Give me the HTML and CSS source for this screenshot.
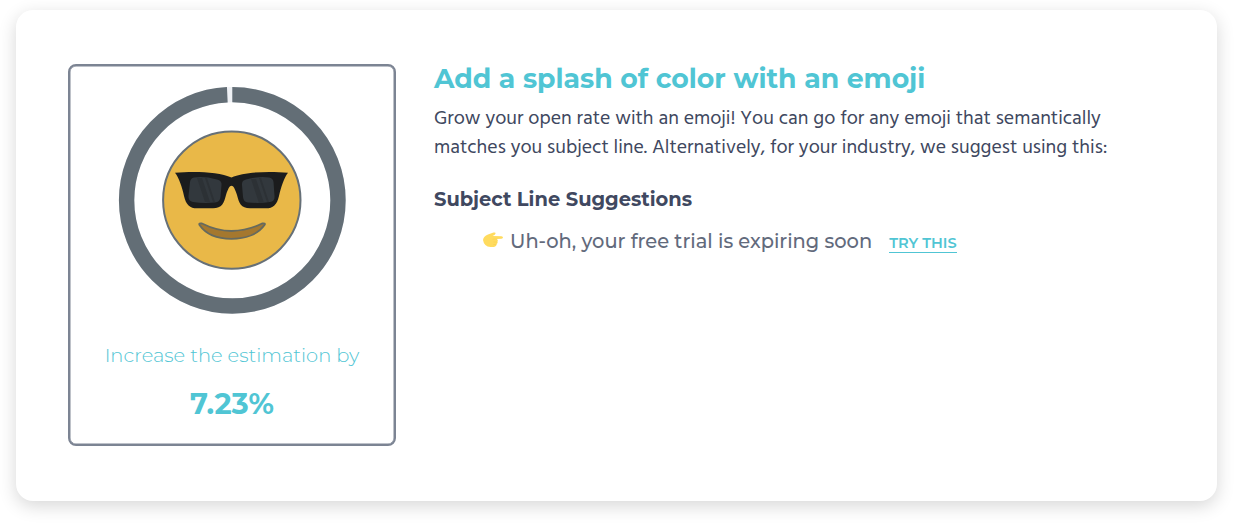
FILE: index.html
```html
<!DOCTYPE html>
<html lang="en">
<head>
    <meta charset="UTF-8">
    <meta name="viewport" content="width=device-width, initial-scale=1.0">
    <title>Subject Line Suggestions</title>
    <link rel="stylesheet" href="styles.css">
</head>
<body>
    <div class="card">
        <div class="score">
            <svg class="score-ring" viewBox="0 0 228 228">
                <circle cx="114.300" cy="114.300" r="105.7" fill="none" stroke="#eff1f5" stroke-width="15.4"/>
                <circle cx="114.300" cy="114.300" r="105.7" fill="none" stroke="#636e76" stroke-width="15.4" pathLength="1000" stroke-dasharray="992.3 7.7" transform="rotate(-90 114.300 114.300)"/>
                <!-- face -->
                <circle cx="113.8" cy="114.1" r="68.7" fill="#e9b848" stroke="#667078" stroke-width="2"/>
                <!-- sunglasses -->
                <path d="M57 86.8C76 85 101 85.8 113.5 91.5C126 85.8 151 85 170 86.8C166 92 163 101 161 110C159 119 155 122.300 148 122.300H132C123 122.300 121 117 119 109C117 103 115.500 99.800 113.500 99.800C111.500 99.800 110 103 108 109C106 117 104 122.300 95 122.300H79C72 122.300 68 119 66 110C64 101 61 92 57 86.800Z" fill="#1b1c1d"/>
                <path d="M76 91.500Q86 90 99 93.500Q104 94.500 103.500 99L102.500 111Q102 116 97 116.500Q85 117.500 75 116Q70 115 70.500 110L72 96Q72.500 92 76 91.500Z" fill="#32383d"/>
                <path d="M151 91.500Q141 90 128 93.500Q123.500 94.500 124 99L125 111Q125.500 116 130 116.500Q142 117.500 152 116Q157 115 156.500 110L155.500 96Q155 92 151 91.500Z" fill="#32383d"/>
                <path d="M79 92h5l8 24h-5zM87 92h2l8 24h-2zM133 93h5l8 24h-5zM141 92h2l8 24h-2z" fill="#2c3135"/>
                <!-- mouth -->
                <path d="M81.500 139Q80.500 137 84 137.500Q99 145 113.500 145Q130 144.500 144 137.500Q148 137 146.500 139C140 148.500 127 152.800 113.500 152.800C100 152.800 88 148.500 81.500 139Z" fill="#a5782e" stroke="#666a5e" stroke-width="1.8"/>
            </svg>
            <p class="score-label">Increase the estimation by</p>
            <p class="score-value">7.23%</p>
        </div>
        <div class="content">
            <h2 class="title">Add a splash of color with an emoji</h2>
            <p class="text">Grow your open rate with an emoji! You can go for any emoji that semantically<br>matches you subject line. Alternatively, for your industry, we suggest using this:</p>
            <h3 class="subtitle">Subject Line Suggestions</h3>
            <div class="suggestion">
                <svg class="hand" viewBox="0 0 20 16">
                    <path d="M0 8Q.5 4 5 2.500L10.500.600Q13 0 12.500 1.800Q12 3 9.500 4L18.500 4.200Q20 4.500 20 5.600Q20 6.700 18.500 6.800L14 7Q15.500 8 14.500 9.500Q15 11 13.700 12Q13.800 13.500 12.500 14.200Q11 15.300 7.500 15Q1 14.500 0 8Z" fill="#ffdb5e"/>
                    <path d="M9.500 7.200L14 7M10.500 10H14.300M10.300 12.500H13.300" fill="none" stroke="#f2c94a" stroke-width=".4"/>
                </svg>
                <span class="subject">Uh-oh, your free trial is expiring soon</span>
                <a class="try" href="#">TRY THIS</a>
            </div>
        </div>
    </div>
</body>
</html>
```
FILE: styles.css
```css
*{
    margin: 0;
    padding: 0;
    box-sizing: border-box;
}
body{
    background: #fff;
    min-height: 100vh;
    padding: 10px 17px 0 16px;
    font-family: Montserrat, Inter, sans-serif;
}
.card{
    display: flex;
    gap: 38px;
    height: 491px;
    padding: 54px 52px;
    border-radius: 17px;
    background: #fff;
    box-shadow: 0 5px 18px rgba(0, 0, 0, 0.16);
}
.score{
    display: flex;
    flex-direction: column;
    align-items: center;
    width: 328px;
    height: 382px;
    flex-shrink: 0;
    padding-top: 20px;
    border: 2px solid #7c8493;
    border-radius: 8px;
    box-shadow: inset 0 0 0 0.5px #7c8493;
    color: #50c5d4;
}
.score-ring{
    width: 228px;
    height: 228px;
}
.score-label{
    margin-top: 27px;
    font-size: 19.45px;
    font-weight: 300;
    line-height: 28px;
    white-space: nowrap;
}
.score-value{
    margin-top: 17px;
    font-size: 29px;
    font-weight: 700;
    line-height: 36px;
}
.content{
    color: #404860;
    white-space: nowrap;
}
.title{
    margin-top: -3px;
    font-size: 26.72px;
    font-weight: 700;
    line-height: 36px;
    color: #50c5d4;
}
.text{
    margin-top: 8px;
    font-family: Hind, "Noto Sans", sans-serif;
    font-size: 19.82px;
    font-weight: 400;
    line-height: 29px;
}
.subtitle{
    margin-top: 21px;
    font-size: 19.45px;
    font-weight: 700;
    line-height: 30px;
}
.suggestion{
    display: flex;
    align-items: center;
    margin-top: 12px;
    padding-left: 49px;
    line-height: 30px;
}
.hand{
    width: 20px;
    height: 16px;
    margin: -2px 7px 0 0;
}
.subject{
    font-size: 19.45px;
    font-weight: 500;
    color: #626a7c;
}
.try{
    margin: 4px 0 0 17px;
    font-size: 14.6px;
    font-weight: 600;
    line-height: 18px;
    color: #50c5d4;
    text-decoration: none;
    border-bottom: 1px solid #50c5d4;
}
```
